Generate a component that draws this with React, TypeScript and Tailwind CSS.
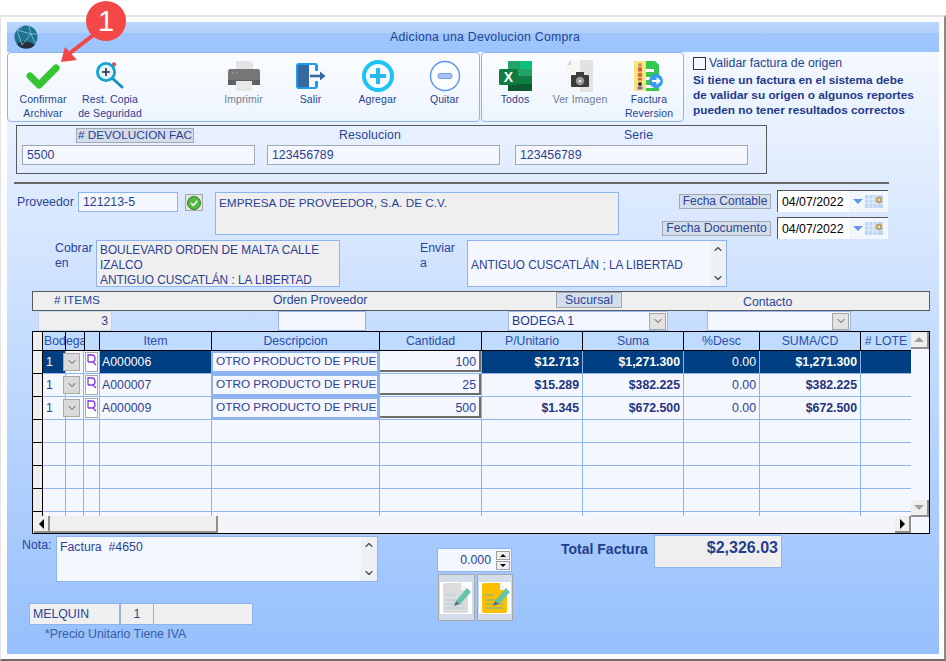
import type { ReactNode } from "react";
import { ChevronDown, ChevronUp } from "lucide-react";

const CheckIcon = () => (
  <svg width="36" height="30" viewBox="0 0 36 30">
    <path d="M5 15 L14 24 L31 7" fill="none" stroke="#33c532" strokeWidth="7" strokeLinecap="round" strokeLinejoin="round" />
  </svg>
);

const RestoreIcon = () => (
  <svg width="30" height="30" viewBox="0 0 30 30">
    <circle cx="19" cy="3.5" r="2.2" fill="#d9534f" />
    <path d="M17 17 L27 26" stroke="#1590c8" strokeWidth="3" strokeLinecap="round" />
    <circle cx="11" cy="11" r="8.6" fill="#e8f4fa" stroke="#12a3cf" strokeWidth="2.8" />
    <path d="M11 7 V15 M7 11 H15" stroke="#263238" strokeWidth="1.6" />
  </svg>
);

const PrinterIcon = () => (
  <svg width="34" height="32" viewBox="0 0 34 32">
    <path d="M9 1 H23 L26 4 V10 H9 Z" fill="#e4e4e4" />
    <path d="M3 9 H31 Q33 9 33 12 V25 H1 V12 Q1 9 3 9 Z" fill="#767676" />
    <rect x="1" y="20" width="32" height="5" fill="#5f5f5f" />
    <circle cx="6" cy="13" r="1" fill="#9a9a9a" />
    <circle cx="10" cy="13" r="1" fill="#9a9a9a" />
    <rect x="9" y="21" width="16" height="10" fill="#e8e8e8" />
  </svg>
);

const ExitIcon = () => (
  <svg width="32" height="28" viewBox="0 0 32 28">
    <path d="M4 1 H20 Q23 1 23 4 V9 H20 V3 H14 V25 H20 V19 H23 V24 Q23 27 20 27 H4 Q1 27 1 24 V4 Q1 1 4 1 Z" fill="#1a9cf0" />
    <path d="M3 3 H14 V25 H3 Z" fill="#35689f" />
    <path d="M15 14 H26" stroke="#35689f" strokeWidth="2.6" />
    <path d="M25 9.5 L30.5 14 L25 18.5 Z" fill="#35689f" />
  </svg>
);

const PlusIcon = () => (
  <svg width="34" height="34" viewBox="0 0 34 34">
    <circle cx="17" cy="17" r="14" fill="#f5fbff" stroke="#1cc3f6" strokeWidth="4" />
    <path d="M17 9 V25 M9 17 H25" stroke="#25b9ee" strokeWidth="4" />
  </svg>
);

const MinusIcon = () => (
  <svg width="32" height="32" viewBox="0 0 32 32">
    <circle cx="16" cy="16" r="14.5" fill="#fbfdff" stroke="#5b96ee" strokeWidth="1.4" />
    <rect x="9" y="13.5" width="14" height="5" rx="2" fill="#a8c4f2" stroke="#6f9fe8" />
  </svg>
);

const ExcelIcon = () => (
  <svg width="33" height="32" viewBox="0 0 33 32">
    <rect x="9" y="1" width="24" height="30" rx="1" fill="#21a366" />
    <rect x="21" y="1" width="12" height="8" fill="#0dc07b" />
    <rect x="21" y="9" width="12" height="7" fill="#21a366" />
    <rect x="21" y="16" width="12" height="8" fill="#107c41" />
    <rect x="9" y="16" width="12" height="8" fill="#107c41" />
    <rect x="9" y="24" width="24" height="7" fill="#0b5a30" />
    <rect x="0" y="9" width="19" height="16" rx="1.5" fill="#107c41" />
    <text x="9.5" y="22" textAnchor="middle" fill="#fff" fontSize="14" fontWeight="700" fontFamily="Liberation Sans">X</text>
  </svg>
);

const PhotoIcon = () => (
  <svg width="28" height="32" viewBox="0 0 28 32">
    <path d="M5 0 H27 V32 H1 V5 Z" fill="#f7f7f7" />
    <path d="M14 0 H27 V32 H14 Z" fill="#e2e2e2" />
    <path d="M1 5 L5 0 V5 Z" fill="#d0d0d0" />
    <rect x="5" y="15" width="18" height="12" rx="1" fill="#3c3c3c" />
    <rect x="10" y="12" width="8" height="4" fill="#3c3c3c" />
    <circle cx="14" cy="21" r="4.2" fill="#9a9a9a" />
    <circle cx="14" cy="21" r="1.3" fill="#f0f0f0" />
  </svg>
);

const ReversalIcon = () => (
  <svg width="30" height="32" viewBox="0 0 30 32">
    <rect x="0" y="1" width="12" height="30" fill="#f5e57c" />
    <path d="M12 1 H21 L25 5 V31 H12 Z" fill="#35c653" />
    <rect x="12" y="9" width="8" height="3" fill="#fff" />
    <rect x="12" y="17" width="8" height="3" fill="#fff" />
    <rect x="12" y="25" width="8" height="3" fill="#fff" />
    <circle cx="6" cy="5" r="2" fill="#c9946c" />
    <rect x="4" y="7.5" width="4" height="4" fill="#d9534f" />
    <circle cx="6" cy="15" r="2.4" fill="#d9682f" />
    <rect x="4" y="18" width="4" height="2.5" fill="#e05a5a" />
    <circle cx="6" cy="24" r="2" fill="#333" />
    <rect x="3.5" y="26.5" width="5" height="3" fill="#8a63c9" />
    <circle cx="22" cy="21" r="7" fill="#3a9bf0" />
    <path d="M18 21 H25 M22.5 18.2 L25.5 21 L22.5 23.8" fill="none" stroke="#fff" strokeWidth="1.8" />
  </svg>
);

const Globe = () => (
  <svg width="24" height="24" viewBox="0 0 24 24">
    <circle cx="12" cy="12" r="11.5" fill="#1d7391" />
    <path d="M3 19 Q10 13 21 20 Q17 24 12 23.5 Q6 23.5 3 19 Z" fill="#26303f" />
    <path d="M3 5 L17 9 L21 18 M17 9 L15 1 M17 9 L8 20 M3 5 L8 20 M9 1 L3 5 M17 9 L23 9" fill="none" stroke="#8cc6da" strokeWidth="0.8" />
  </svg>
);

const NoteIcon = ({ color, line }: { color: string; line: string }) => (
  <svg width="32" height="32" viewBox="0 0 32 32">
    <rect width="32" height="32" fill="#fff" />
    <path d="M5 1 H21 L28 8 V29 Q28 31 26 31 H5 Q3 31 3 29 V3 Q3 1 5 1 Z" fill={color} />
    <path d="M21 1 L28 8 H21 Z" fill="#f5f5f5" />
    <path d="M5 13 H15 M6 18 H24 M6 22 H24 M6 26 H24" stroke={line} strokeWidth="1.2" />
    <path d="M16 19 L27 6 L31 10 L20 22 Z" fill="#62c5a8" />
    <path d="M16 19 L14 24 L20 22 Z" fill="#56708a" />
  </svg>
);

const Tool = ({ icon, lines, muted, className }: { icon: ReactNode; lines: string[]; muted?: boolean; className: string }) => (
  <div className={`flex flex-col items-center pt-[7px] leading-[14px] tracking-[0.1px] text-[10.5px] ${muted ? "text-[#6f7b8f]" : "text-[#27438f]"} ${className}`}>
    <div className="flex h-[32px] items-center justify-center">{icon}</div>
    {lines.map((l) => (
      <span key={l} className="whitespace-nowrap">{l}</span>
    ))}
  </div>
);

const Field = ({ value, className }: { value: string; className: string }) => (
  <div className={`flex h-[20px] items-center border border-[#a3a9b3] bg-[#f4f7fe] px-[4px] text-[#2b3f94] ${className}`}>{value}</div>
);

const ScrollArrows = () => (
  <div className="flex w-[16px] flex-col items-center justify-between bg-[#eef0f5] py-[2px] text-[#444]">
    <ChevronUp size={12} strokeWidth={2.2} />
    <ChevronDown size={12} strokeWidth={2.2} />
  </div>
);

const DateBox = () => (
  <div className="flex h-[22px] w-[111px] border-l border-t border-[#555] bg-white">
    <span className="flex w-[71px] items-center pl-[4px] pt-[2px] text-[12.3px] text-black">04/07/2022</span>
    <div className="flex flex-1 items-center gap-[2px] bg-[#f2f6fd] pl-[4px]">
      <span className="h-0 w-0 border-x-[5px] border-t-[5px] border-x-transparent border-t-[#5f97e6]" />
      <svg width="18" height="13" viewBox="0 0 18 13">
        <rect width="18" height="13" fill="#bcd6f7" />
        <path d="M0 4 H18 M0 8 H18 M4 0 V13 M8 0 V13 M12 0 V13" stroke="#e9f1fc" strokeWidth="1" />
        <circle cx="14" cy="5" r="2.4" fill="none" stroke="#c49a3a" strokeWidth="1.6" />
      </svg>
    </div>
  </div>
);

const SelectBox = ({ value, className }: { value: string; className: string }) => (
  <div className={`flex h-[20px] items-center justify-between border border-[#97b9ec] bg-[#f4f7fe] pl-[3px] pr-[1px] text-[#22378d] ${className}`}>
    <span>{value}</span>
    <span className="flex h-[17px] w-[17px] items-center justify-center border border-[#a6a6a6] bg-[#e2e2e2] text-[#555]">
      <ChevronDown size={12} />
    </span>
  </div>
);

const rows = [
  { code: "A000006", qty: "100", unit: "$12.713", sum: "$1,271.300", total: "$1,271.300" },
  { code: "A000007", qty: "25", unit: "$15.289", sum: "$382.225", total: "$382.225" },
  { code: "A000009", qty: "500", unit: "$1.345", sum: "$672.500", total: "$672.500" },
];

const headers = [
  { label: "Item", w: "w-[112px]" },
  { label: "Descripcion", w: "w-[168px]" },
  { label: "Cantidad", w: "w-[102px]" },
  { label: "P/Unitario", w: "w-[101px]" },
  { label: "Suma", w: "w-[101px]" },
  { label: "%Desc", w: "w-[76px]" },
  { label: "SUMA/CD", w: "w-[101px]" },
  { label: "# LOTE", w: "w-[50px]" },
];

const emptyCols = ["w-[23px]", "w-[18px]", "w-[16px]", "w-[112px]", "w-[168px]", "w-[102px]", "w-[101px]", "w-[101px]", "w-[76px]", "w-[101px]", "w-[50px]"];

const HeaderRow = () => (
  <div className="flex h-[19px] shrink-0 border-b border-black">
    <div className="w-[10px] border-r border-black bg-[#efefef]" />
    <div className="relative w-[41px] overflow-hidden bg-[#bfdbff] pl-[1px] leading-[18px] text-[#2c4ca6]">
      Bodega
      <span className="absolute left-[22px] top-0 h-full w-px bg-black" />
    </div>
    <div className="w-[16px] border-x border-black bg-[#bfdbff]" />
    {headers.map((h) => (
      <div key={h.label} className={`${h.w} border-r border-black bg-[#bfdbff] text-center leading-[18px] text-[#2c4ca6] last:border-r-0`}>
        {h.label}
      </div>
    ))}
  </div>
);

const DataRow = ({ row, selected }: { row?: (typeof rows)[number]; selected: boolean }) => {
  const cell = `h-full border-r border-[#8db4ee] leading-[22px] ${selected ? "bg-[#003f82] text-white" : "text-[#2b3f94]"}`;
  const num = `h-full border-r border-[#8db4ee] px-[3px] text-right font-bold leading-[22px] ${selected ? "bg-[#003f82] text-white" : "text-[#26327e]"}`;
  return (
    <div className="flex h-[23px] shrink-0 border-b border-[#8db4ee]">
      <div className="-mb-px w-[10px] border-b border-r border-black bg-[#efefef]" />
      {row ? (
        <>
          <div className={`w-[23px] pl-[3px] ${cell}`}>1</div>
          <div className="flex w-[18px] items-center border-r border-[#8db4ee]">
            <span className="-ml-[3px] flex h-[18px] w-[17px] shrink-0 items-center justify-center border border-[#a9a9a9] bg-[#dadada] text-[#555]">
              <ChevronDown size={12} />
            </span>
          </div>
          <div className="flex w-[16px] items-center justify-center border-r border-[#8db4ee]">
            <span className="flex h-[20px] w-[13px] items-start justify-center border border-[#a9a9a9] bg-white">
              <svg width="11" height="13" viewBox="0 0 11 13">
                <path d="M2 2 H6 Q9 2 9 6 Q9 9 5 9 H2 M7 9 L10 12" fill="none" stroke="#8a33e8" strokeWidth="1.4" />
                <path d="M2 1 V9" stroke="#5b3fd6" strokeWidth="1.2" />
              </svg>
            </span>
          </div>
          <div className={`w-[112px] pl-[2px] ${cell}`}>{row.code}</div>
          <div className="w-[168px] border-r border-[#8db4ee] bg-[#8db4ee] p-[2px] pl-[1px]">
            <div className="h-full whitespace-nowrap bg-[#f4f7fe] pl-[3px] text-[11.8px] leading-[17px] text-[#2b3f94]">OTRO PRODUCTO DE PRUE</div>
          </div>
          <div className="w-[102px] border-r border-[#8db4ee] pb-px">
            <div className="h-full border-b-2 border-r-2 border-[#6d6d6d] bg-[#f4f7fe] pr-[3px] pt-[2px] text-right leading-[18px] text-[#2b3f94]">{row.qty}</div>
          </div>
          <div className={`w-[101px] ${num}`}>{row.unit}</div>
          <div className={`w-[101px] ${num}`}>{row.sum}</div>
          <div className={`w-[76px] pr-[3px] ${cell} text-right`}>0.00</div>
          <div className={`w-[101px] ${num}`}>{row.total}</div>
          <div className={`w-[50px] ${selected ? "bg-[#003f82]" : ""}`} />
        </>
      ) : (
        emptyCols.map((w, i) => <div key={i} className={`${w} border-r border-[#8db4ee] last:border-r-0`} />)
      )}
    </div>
  );
};

const Bevel = ({ children, className }: { children?: ReactNode; className: string }) => (
  <div className={`flex items-center justify-center border-b-2 border-r-2 border-[#8f8f8f] bg-[#efefef] ${className}`}>{children}</div>
);

export default function App() {
  return (
    <div className="relative h-[661px] w-[946px] overflow-hidden bg-white pt-[15px] font-['Liberation_Sans',Arial,sans-serif] text-[12.3px]">
      <div className="h-[646px] border-b-2 border-l border-r-2 border-t-2 border-b-[#6e6e6e] border-l-[#e4e4e4] border-r-[#8a8a8a] border-t-[#e4e4e4] bg-[#fdfdfd] pb-[3px] pl-[6px] pr-[5px] pt-[5px]">
        <div className="flex h-[30px] items-center bg-[linear-gradient(#bbd7fb_0,#b0d0fb_37%,#9fc6fd_38%,#9cc4fd_100%)] pl-[7px]">
          <Globe />
          <div className="flex-1 pr-[7px] text-center tracking-[0.25px] text-[#27438f]">Adiciona una Devolucion Compra</div>
        </div>

        <div className="h-[602px] bg-[linear-gradient(#f4f8ff,#c5dcff_48%,#96c0fd)]">
          <div className="flex h-[70px] items-start">
            <div className="flex h-[70px] w-[473px] rounded-[4px] border border-[#8fb4ea] bg-[linear-gradient(#fafcff,#eef5ff)]">
              <Tool className="w-[70px]" icon={<CheckIcon />} lines={["Confirmar", "Archivar"]} />
              <Tool className="w-[64px]" icon={<RestoreIcon />} lines={["Rest. Copia", "de Seguridad"]} />
              <Tool className="ml-[68px] w-[67px]" icon={<PrinterIcon />} lines={["Imprimir"]} muted />
              <Tool className="w-[67px]" icon={<ExitIcon />} lines={["Salir"]} />
              <Tool className="w-[67px]" icon={<PlusIcon />} lines={["Agregar"]} />
              <Tool className="w-[67px]" icon={<MinusIcon />} lines={["Quitar"]} />
            </div>
            <div className="ml-px flex h-[70px] w-[203px] rounded-[4px] border border-[#8fb4ea] bg-[linear-gradient(#fafcff,#eef5ff)]">
              <Tool className="w-[66px]" icon={<ExcelIcon />} lines={["Todos"]} />
              <Tool className="w-[64px]" icon={<PhotoIcon />} lines={["Ver Imagen"]} muted />
              <Tool className="w-[71px] pl-[3px]" icon={<ReversalIcon />} lines={["Factura", "Reversion"]} />
            </div>
            <div className="ml-[9px] w-[240px] pt-[5px] text-[#27438f]">
              <div className="flex items-center gap-[3px] leading-[13px]">
                <span className="h-[13px] w-[13px] border border-[#333] bg-[#f4f8ff]" />
                Validar factura de origen
              </div>
              <p className="mt-[3px] whitespace-pre-line text-[11.8px] font-bold leading-[15px] text-[#1f3a8a]">
                {"Si tiene un factura en el sistema debe\nde validar su origen o algunos reportes\npueden no tener resultados correctos"}
              </p>
            </div>
          </div>

          <div className="ml-[9px] mt-[3px] flex h-[49px] w-[751px] gap-[12px] border border-[#5a5a5a] pl-[5px] text-[#2b4499]">
            <div className="w-[233px]">
              <div className="flex h-[19px] items-start justify-center pr-[7px] pt-[2px]">
                <span className="h-[15px] w-[118px] whitespace-nowrap border border-[#a3a9b3] bg-[#d4deea] pl-px text-[11.8px] leading-[13px] text-[#2b3f94]"># DEVOLUCION FAC</span>
              </div>
              <Field value="5500" className="w-[233px]" />
            </div>
            <div className="w-[233px]">
              <div className="h-[19px] pr-[27px] text-center leading-[18px] tracking-[0.1px]">Resolucion</div>
              <Field value="123456789" className="w-[233px]" />
            </div>
            <div className="ml-[3px] w-[233px]">
              <div className="h-[19px] pl-[14px] text-center leading-[18px] tracking-[0.1px]">Serie</div>
              <Field value="123456789" className="w-[233px]" />
            </div>
          </div>

          <div className="ml-[7px] mt-[8px] h-[2px] w-[875px] bg-[#666]" />

          <div className="mt-[6px] flex h-[50px] text-[#2b4499]">
            <div className="ml-[10px] flex items-start pt-[2px]">
              <span className="w-[61px] pt-[3px] leading-[15px]">Proveedor</span>
              <span className="flex h-[20px] w-[100px] items-center border border-[#8db4ee] bg-[#f4f7fe] pl-[4px] text-[#2b3f94]">121213-5</span>
              <span className="ml-[7px] mt-[2px] flex h-[17px] w-[18px] items-center justify-center border border-[#a8a8a8] bg-[#dfe5df]">
                <svg width="14" height="14" viewBox="0 0 14 14">
                  <circle cx="7" cy="7" r="6.5" fill="#55b83f" stroke="#2f7d2a" />
                  <path d="M4 7 L6.3 9.4 L10.3 4.8" fill="none" stroke="#fff" strokeWidth="1.6" />
                </svg>
              </span>
              <span className="ml-[12px] h-[43px] w-[404px] border border-[#8db4ee] bg-[#efefef] pl-[3px] pt-[2px] text-[11.75px] leading-[15px] text-[#2b3f94]">EMPRESA DE PROVEEDOR, S.A. DE C.V.</span>
            </div>
            <div className="flex w-[269px] flex-col items-end">
              <div className="flex items-center gap-[6px]">
                <span className="h-[15px] w-[92px] whitespace-nowrap border border-[#a3a9b3] bg-[#d4deea] text-center text-[12px] leading-[13px]">Fecha Contable</span>
                <DateBox />
              </div>
              <div className="mt-[5px] flex items-center gap-[6px]">
                <span className="h-[15px] w-[109px] whitespace-nowrap border border-[#a3a9b3] bg-[#d4deea] text-center leading-[13px]">Fecha Documento</span>
                <DateBox />
              </div>
            </div>
          </div>

          <div className="flex h-[47px] text-[#2b4499]">
            <span className="ml-[48px] w-[41px] pt-px leading-[15px]">Cobrar<br />en</span>
            <div className="h-[47px] w-[244px] overflow-hidden border border-[#8db4ee] bg-[#efefef] pl-[3px] pt-[2px] text-[11.85px] leading-[15px] text-[#2b3f94]">
              BOULEVARD ORDEN DE MALTA CALLE<br />IZALCO<br />ANTIGUO CUSCATLÁN : LA LIBERTAD
            </div>
            <span className="ml-[80px] w-[47px] pt-px leading-[15px]">Enviar<br />a</span>
            <div className="flex h-[47px] w-[260px] border border-[#8db4ee] bg-[#f4f7fe] text-[#2b3f94]">
              <span className="flex-1 pl-[3px] pt-[17px] text-[11.85px] leading-[15px]">ANTIGUO CUSCATLÁN ; LA LIBERTAD</span>
              <ScrollArrows />
            </div>
          </div>

          <div className="ml-[25px] mt-[4px] flex h-[20px] w-[898px] border border-[#5a5a5a] bg-[#efefef] leading-[17px] text-[#2b4499]">
            <span className="ml-[21px] w-[219px] text-[11.8px]"># ITEMS</span>
            <span className="w-[283px]">Orden Proveedor</span>
            <span className="h-[16px] w-[66px] border border-[#a3a9b3] bg-[#d4deea] text-center leading-[14px]">Sucursal</span>
            <span className="ml-[121px] mt-[2px]">Contacto</span>
          </div>

          <div className="ml-[31px] flex h-[20px] text-[#2b3f94]">
            <span className="h-[20px] w-[74px] border border-[#c4d6ef] bg-[#efefef] pr-[3px] text-right leading-[19px]">3</span>
            <span className="ml-[166px] h-[20px] w-[88px] border border-[#8db4ee] bg-[#f4f7fe]" />
            <SelectBox value="BODEGA 1" className="ml-[142px] w-[160px]" />
            <SelectBox value="" className="ml-[39px] w-[144px]" />
          </div>

          <div className="ml-[25px] h-[203px] w-[898px] border border-black bg-[#f4f7fe]">
            <div className="flex h-[184px]">
              <div className="flex h-[184px] w-[878px] flex-col overflow-hidden">
                <HeaderRow />
                <div className="flex-1 overflow-hidden">
                  <DataRow row={rows[0]} selected />
                  <DataRow row={rows[1]} selected={false} />
                  <DataRow row={rows[2]} selected={false} />
                  <DataRow selected={false} />
                  <DataRow selected={false} />
                  <DataRow selected={false} />
                  <DataRow selected={false} />
                  <DataRow selected={false} />
                </div>
              </div>
              <div className="flex h-[185px] w-[18px] flex-col justify-between">
                <Bevel className="h-[17px]">
                  <span className="h-0 w-0 border-x-[5px] border-b-[5px] border-x-transparent border-b-[#a0a0a0]" />
                </Bevel>
                <Bevel className="h-[17px]">
                  <span className="h-0 w-0 border-x-[5px] border-t-[5px] border-x-transparent border-t-[#a0a0a0]" />
                </Bevel>
              </div>
            </div>
            <div className="flex h-[17px] w-[878px] bg-[#f3f5f8] pl-px">
              <Bevel className="w-[16px]">
                <span className="h-0 w-0 border-y-[5px] border-r-[5px] border-y-transparent border-r-black" />
              </Bevel>
              <Bevel className="w-[168px]" />
              <Bevel className="ml-auto w-[16px]">
                <span className="h-0 w-0 border-y-[5px] border-l-[5px] border-y-transparent border-l-black" />
              </Bevel>
            </div>
          </div>

          <div className="ml-[15px] flex">
            <div className="w-[356px]">
              <div className="mt-[2px] flex">
                <span className="w-[34px] pt-[2px] leading-[15px] text-[#2b4499]">Nota:</span>
                <div className="flex h-[46px] w-[322px] border border-[#8db4ee] bg-[#f4f7fe]">
                  <span className="flex-1 whitespace-pre pl-[3px] pt-[3px] leading-[15px] text-[#2b3f94]">Factura  #4650</span>
                  <ScrollArrows />
                </div>
              </div>
              <div className="ml-[7px] mt-[21px] flex h-[22px] w-[224px] border border-[#8db4ee] bg-[#efefef] leading-[20px] text-[#2b3f94]">
                <span className="w-[91px] border-r-2 border-[#8db4ee] pl-[3px]">MELQUIN</span>
                <span className="w-[33px] border-r border-[#8db4ee] text-center">1</span>
              </div>
              <div className="ml-[23px] mt-px leading-[17px] text-[#3a5aa8]">*Precio Unitario Tiene IVA</div>
            </div>

            <div className="ml-[59px] w-[76px] pt-[14px]">
              <div className="flex h-[24px] w-[75px] items-center border border-[#8db4ee] bg-[#f4f7fe] text-[#2b3f94]">
                <span className="w-[53px] text-right">0.000</span>
                <div className="ml-[5px] flex flex-col gap-px">
                  <span className="flex h-[9px] w-[14px] items-center justify-center border border-[#a0a0a0] bg-[#efefef]">
                    <span className="h-0 w-0 border-x-[3px] border-b-[3px] border-x-transparent border-b-black" />
                  </span>
                  <span className="flex h-[9px] w-[14px] items-center justify-center border border-[#a0a0a0] bg-[#efefef]">
                    <span className="h-0 w-0 border-x-[3px] border-t-[3px] border-x-transparent border-t-black" />
                  </span>
                </div>
              </div>
              <div className="ml-px mt-[2px] flex gap-[2px]">
                <span className="flex h-[47px] w-[37px] items-center justify-center border border-[#a8a8a8] bg-[#d2dde9]">
                  <NoteIcon color="#dcdcdc" line="#a9cfe0" />
                </span>
                <span className="flex h-[47px] w-[37px] items-center justify-center border border-[#a8a8a8] bg-[#d2dde9]">
                  <NoteIcon color="#fdbf00" line="#5fb9b0" />
                </span>
              </div>
            </div>

            <span className="ml-[48px] w-[93px] pt-[6px] text-[14px] font-bold leading-[18px] text-[#1f3f8f]">Total Factura</span>
            <div className="mt-px h-[33px] w-[128px] border border-[#8db4ee] bg-[#efefef] pr-[3px] pt-[2px] text-right text-[16px] font-bold leading-[20px] text-[#1f3f8f]">$2,326.03</div>
          </div>
        </div>
      </div>

      <svg className="absolute left-0 top-0" width="130" height="70" viewBox="0 0 130 70">
        <path d="M96 33 L70 53" stroke="#f24545" strokeWidth="4" />
        <path d="M61 62 L65 47 L77 60 Z" fill="#f24545" />
      </svg>
      <span className="absolute left-[86px] top-px flex h-[40px] w-[40px] items-center justify-center rounded-full bg-[#f44848] text-[29px] leading-none text-white">1</span>
    </div>
  );
}
